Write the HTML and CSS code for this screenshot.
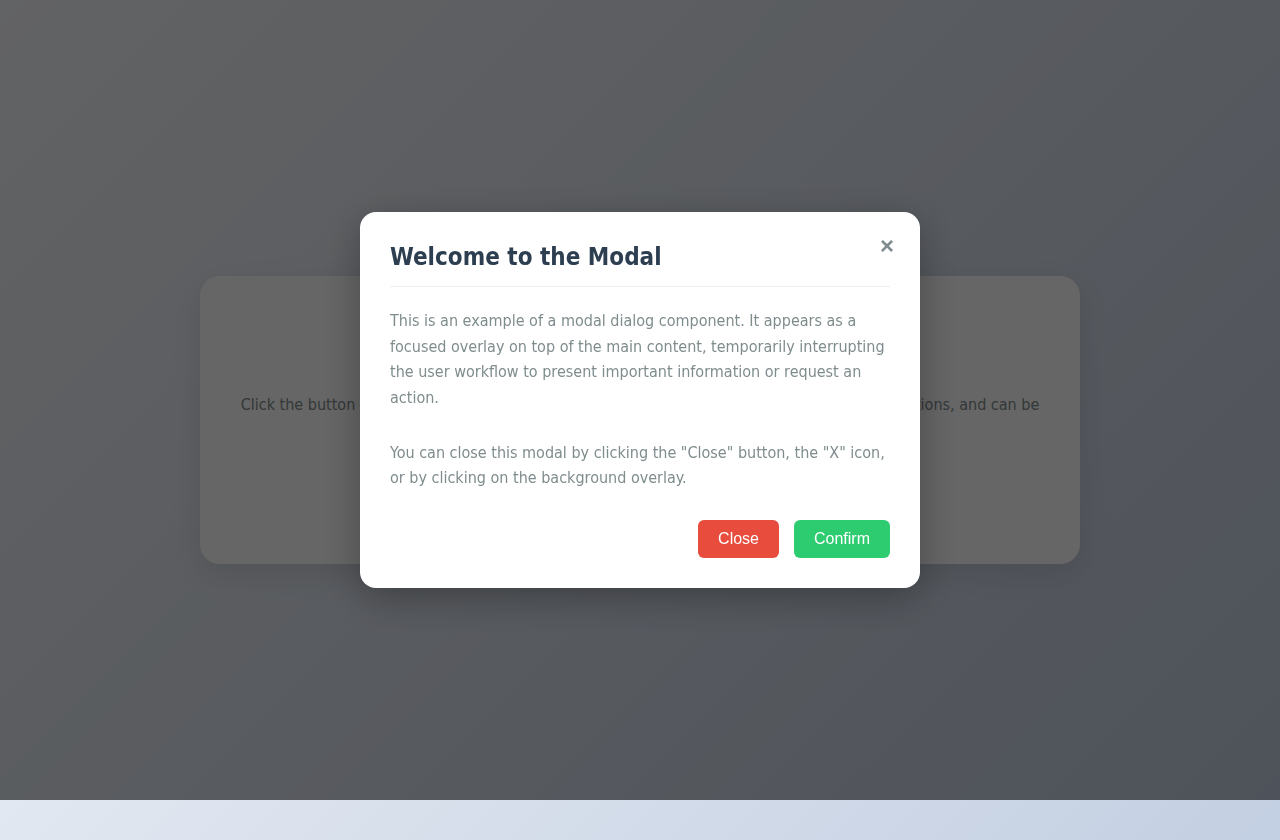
FILE: index.html
```html
<!DOCTYPE html>
<html lang="en">
<head>
<meta charset="utf-8">
<title>Modal Dialog</title>
<link rel="stylesheet" href="styles.css">
</head>
<body>
  <main class="page">
    <section class="card">
      <h1 class="card-title">Modal Dialog Demo</h1>
      <p class="card-text">Click the button below to open a modal dialog. Modals are very useful for forms and confirmations, and can be closed in several ways.</p>
      <button class="open-btn" type="button">Open Modal</button>
    </section>
  </main>

  <div class="overlay">
    <div class="modal" role="dialog" aria-modal="true" aria-labelledby="modal-title">
      <button class="modal-x" type="button" aria-label="Close">&times;</button>
      <header class="modal-header">
        <h2 id="modal-title" class="modal-title">Welcome to the Modal</h2>
      </header>
      <div class="modal-body">
        <p>This is an example of a modal dialog component. It appears as a focused overlay on top of the main content, temporarily interrupting the user workflow to present important information or request an action.</p>
        <p>You can close this modal by clicking the "Close" button, the "X" icon, or by clicking on the background overlay.</p>
      </div>
      <footer class="modal-footer">
        <button class="btn btn-close" type="button">Close</button>
        <button class="btn btn-confirm" type="button">Confirm</button>
      </footer>
    </div>
  </div>
</body>
</html>
```
FILE: styles.css
```css
* { box-sizing: border-box; }

html, body {
  margin: 0;
  height: 100%;
}

body {
  font-family: "DejaVu Sans Condensed", "DejaVu Sans", sans-serif;
  background: linear-gradient(135deg, #f5f7fa 0%, #c3cfe2 100%);
  min-height: 840px;
}

.page {
  height: 840px;
  display: flex;
  align-items: center;
  justify-content: center;
}

.card {
  width: 880px;
  height: 288px;
  background: #ffffff;
  border-radius: 20px;
  padding: 40px;
  text-align: center;
  box-shadow: 0 10px 30px rgba(0, 0, 0, 0.1);
}

.card-title {
  margin: 0 0 38px;
  font-size: 32px;
  line-height: 38px;
  color: #2c3e50;
}

.card-text {
  margin: 0;
  font-size: 16px;
  line-height: 1.6;
  color: #7f8c8d;
}

.open-btn {
  margin-top: 24px;
  padding: 14px 30px;
  border: none;
  border-radius: 8px;
  background: #3498db;
  color: #fff;
  font-size: 16px;
}

.overlay {
  position: fixed;
  top: 0;
  left: 0;
  width: 100%;
  height: 800px;
  background: rgba(0, 0, 0, 0.6);
  display: flex;
  align-items: center;
  justify-content: center;
}

.modal {
  position: relative;
  width: 560px;
  background: #ffffff;
  border-radius: 16px;
  padding: 30px;
  box-shadow: 0 10px 40px rgba(0, 0, 0, 0.3);
}

.modal-x {
  position: absolute;
  top: 22px;
  right: 26px;
  padding: 0;
  border: none;
  background: none;
  font-family: "Liberation Sans", Arial, sans-serif;
  font-size: 24px;
  font-weight: bold;
  line-height: 1;
  color: #7f8c8d;
  cursor: pointer;
}

.modal-header {
  padding-bottom: 14px;
  border-bottom: 1px solid #eeeeee;
}

.modal-title {
  margin: 0;
  font-size: 24px;
  line-height: 30px;
  font-weight: bold;
  color: #2c3e50;
}

.modal-body {
  display: flex;
  flex-direction: column;
  gap: 29px;
  padding: 21px 0 29px;
}

.modal-body p {
  margin: 0;
  font-size: 16px;
  line-height: 1.6;
  color: #7f8c8d;
}

.modal-footer {
  display: flex;
  justify-content: flex-end;
  gap: 15px;
}

.btn {
  padding: 10px 20px;
  border: none;
  border-radius: 6px;
  font-family: "Liberation Sans", Arial, sans-serif;
  font-size: 16px;
  line-height: 18px;
  color: #ffffff;
  cursor: pointer;
}

.btn-close { background: #e74c3c; }
.btn-confirm { background: #2ecc71; }
```
